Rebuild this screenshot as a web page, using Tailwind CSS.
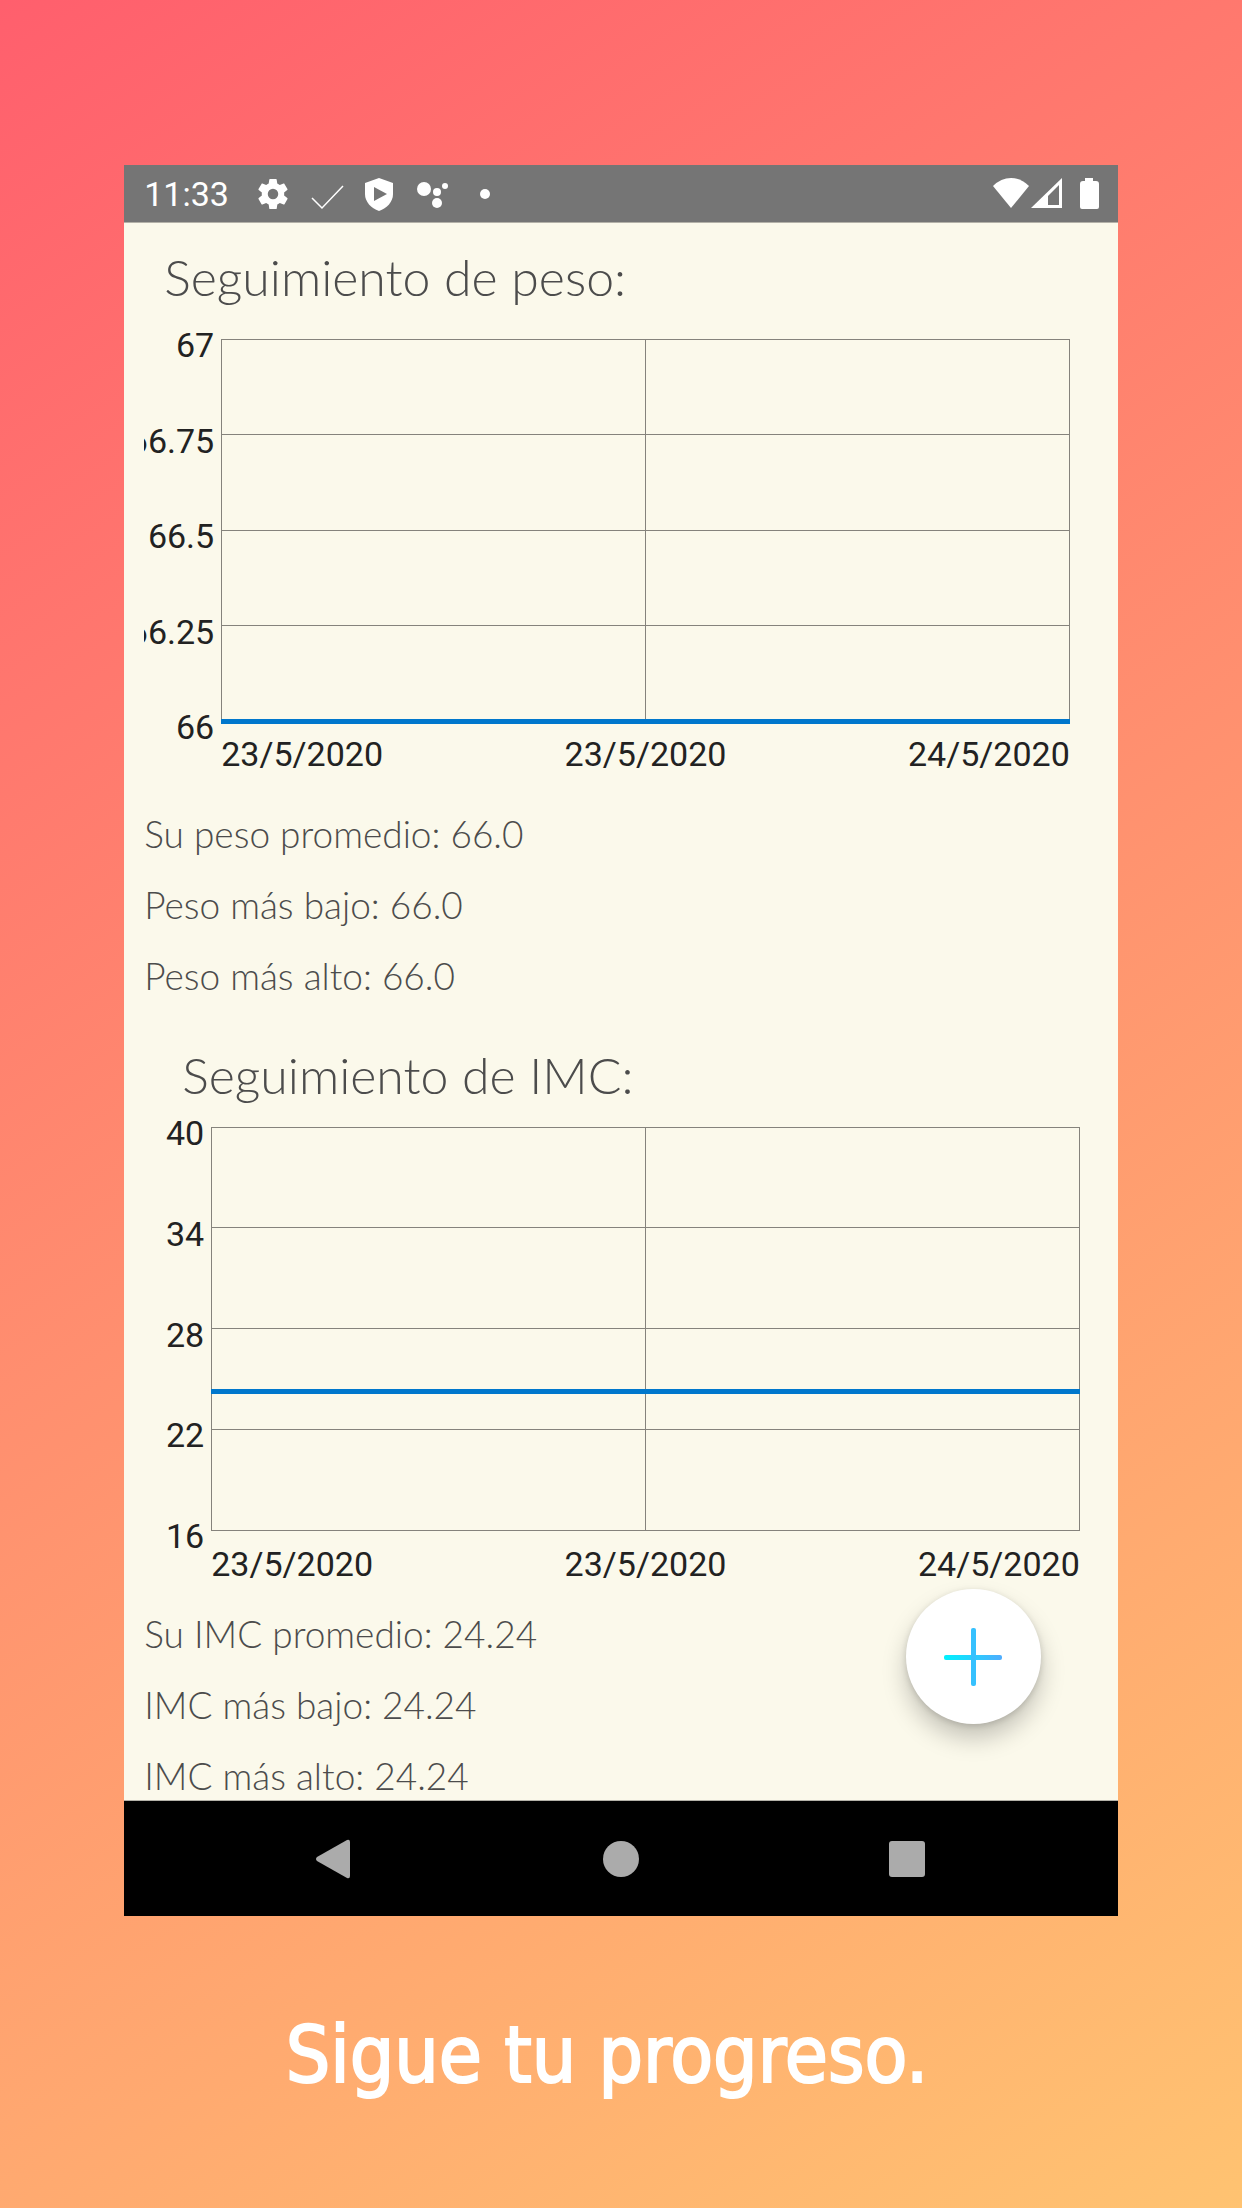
<!DOCTYPE html>
<html lang="es">
<head>
    <meta charset="UTF-8">
    <meta name="viewport" content="width=device-width, initial-scale=1.0">
    <title>Sigue tu progreso</title>
    <script src="https://cdn.jsdelivr.net/npm/@tailwindcss/browser@4"></script>
</head>
<body class="min-h-screen bg-linear-[149deg,#ff5f6d,#ffc371] pt-[165px] pb-16 flex flex-col items-center">
    <!-- Phone -->
    <main class="w-4/5 font-['Roboto',sans-serif]">
        <!-- Status Bar -->
        <header class="h-[57px] bg-[#757575] text-white flex items-center pl-5 pr-[11px]">
            <span class="text-[34px] leading-10">11:33</span>
            <div class="flex items-center gap-[17px] ml-[26px]">
                <svg class="size-9" viewBox="0 0 24 24" fill="currentColor"><path d="M19.4 13a7.500 7.500 0 0 0 0-2l2.100-1.650c.2-.15.250-.4.120-.64l-2-3.460c-.12-.22-.39-.3-.61-.22l-2.490 1a7.300 7.300 0 0 0-1.690-.98l-.38-2.650A.49.49 0 0 0 14 2h-4c-.25 0-.46.18-.49.42l-.38 2.650c-.61.25-1.170.59-1.690.98l-2.490-1c-.23-.09-.49 0-.61.22l-2 3.460c-.13.22-.07.49.12.64L4.570 11a7.900 7.900 0 0 0 0 2l-2.110 1.650c-.19.15-.24.42-.12.64l2 3.460c.12.22.39.3.61.22l2.490-1c.52.4 1.080.73 1.690.98l.38 2.650c.03.24.24.42.49.42h4c.25 0 .46-.18.49-.42l.38-2.650c.61-.25 1.170-.59 1.690-.98l2.490 1c.23.09.49 0 .61-.22l2-3.460c.12-.22.07-.49-.12-.64L19.430 13zM12 15.500a3.500 3.500 0 1 1 0-7 3.500 3.500 0 0 1 0 7z"/></svg>
                <svg class="size-9" viewBox="0 0 36 36" fill="none" stroke="currentColor" stroke-width="1.500"><path d="M4 22l10 10 21-22"/></svg>
                <svg class="size-9" viewBox="0 0 36 36"><path fill="currentColor" d="M18 2l14 5v11c0 8-6 14-14 17C10 32 4 26 4 18V7z"/><path fill="#757575" d="M13 11v14l13-7z"/></svg>
                <svg class="size-9" viewBox="0 0 36 36" fill="currentColor"><circle cx="10" cy="13" r="7"/><circle cx="23" cy="16" r="4"/><circle cx="23" cy="27" r="5"/><circle cx="31" cy="10" r="3"/></svg>
                <svg class="size-9" viewBox="0 0 36 36" fill="currentColor"><circle cx="18" cy="18" r="5"/></svg>
            </div>
            <div class="flex items-center ml-auto">
                <svg class="size-9" viewBox="0 0 36 36" fill="currentColor"><path d="M0 10Q8 2 18 2t18 8L18 32z"/></svg>
                <svg class="size-9" viewBox="0 0 36 36"><path fill="currentColor" d="M2 32L33 2v30z"/><path fill="#757575" d="M19 20l11-11v20H19z"/></svg>
                <svg class="size-9 ml-[6px]" viewBox="0 0 36 36" fill="currentColor"><path d="M14 2h8v3h3q3 0 3 3v23q0 2-2 2H11q-2 0-2-2V8q0-3 3-3h2z"/></svg>
            </div>
        </header>

        <!-- Content -->
        <div class="relative bg-[#fbf9eb] border-y border-[#b3b1a8] pt-[26px] pb-1 px-5 text-[#4c4c4c] font-['Lato',sans-serif] font-light">
            <h1 class="pl-5 text-[50px] leading-[56px]">Seguimiento de peso:</h1>
            <figure class="mt-5 flex pr-7 text-[34px] leading-10 font-['Roboto',sans-serif] font-normal text-[#222222]">
                <div class="h-[422px] w-[70px] shrink-0 overflow-hidden flex flex-col items-end justify-between">
                    <span>67</span><span>66.75</span><span>66.5</span><span>66.25</span><span>66</span>
                </div>
                <div class="grow ml-[7px] mt-[14px]">
                    <svg class="block w-full h-[382px] overflow-visible" stroke="#85837c" stroke-width="1" shape-rendering="crispEdges">
                        <line x1="0" x2="100%" y1="0" y2="0"/>
                        <line x1="0" x2="100%" y1="25%" y2="25%"/>
                        <line x1="0" x2="100%" y1="50%" y2="50%"/>
                        <line x1="0" x2="100%" y1="75%" y2="75%"/>
                        <line x1="0" x2="0" y1="0" y2="100%"/>
                        <line x1="50%" x2="50%" y1="0" y2="100%"/>
                        <line x1="100%" x2="100%" y1="0" y2="100%"/>
                        <line x1="0" x2="100%" y1="100%" y2="100%" stroke="#0077cc" stroke-width="5"/>
                    </svg>
                    <figcaption class="mt-[13px] flex justify-between"><span>23/5/2020</span><span>23/5/2020</span><span>24/5/2020</span></figcaption>
                </div>
            </figure>
            <ul class="mt-10 flex flex-col gap-[31px] text-[37px] leading-10">
                <li>Su peso promedio: 66.0</li>
                <li>Peso más bajo: 66.0</li>
                <li>Peso más alto: 66.0</li>
            </ul>

            <h2 class="mt-[51px] pl-[38px] text-[50px] leading-[56px]">Seguimiento de IMC:</h2>
            <figure class="mt-[10px] flex pr-[18px] text-[34px] leading-10 font-['Roboto',sans-serif] font-normal text-[#222222]">
                <div class="h-[443px] w-[60px] shrink-0 overflow-hidden flex flex-col items-end justify-between">
                    <span>40</span><span>34</span><span>28</span><span>22</span><span>16</span>
                </div>
                <div class="grow ml-[7px] mt-[14px]">
                    <svg class="block w-full h-[403px] overflow-visible" stroke="#85837c" stroke-width="1" shape-rendering="crispEdges">
                        <line x1="0" x2="100%" y1="0" y2="0"/>
                        <line x1="0" x2="100%" y1="25%" y2="25%"/>
                        <line x1="0" x2="100%" y1="50%" y2="50%"/>
                        <line x1="0" x2="100%" y1="75%" y2="75%"/>
                        <line x1="0" x2="100%" y1="100%" y2="100%"/>
                        <line x1="0" x2="0" y1="0" y2="100%"/>
                        <line x1="50%" x2="50%" y1="0" y2="100%"/>
                        <line x1="100%" x2="100%" y1="0" y2="100%"/>
                        <line x1="0" x2="100%" y1="65.600%" y2="65.600%" stroke="#0077cc" stroke-width="5"/>
                    </svg>
                    <figcaption class="mt-[14px] flex justify-between"><span>23/5/2020</span><span>23/5/2020</span><span>24/5/2020</span></figcaption>
                </div>
            </figure>
            <ul class="mt-[30px] flex flex-col gap-[31px] text-[37px] leading-10">
                <li>Su IMC promedio: 24.24</li>
                <li>IMC más bajo: 24.24</li>
                <li>IMC más alto: 24.24</li>
            </ul>

            <button aria-label="Añadir" class="absolute right-[77px] bottom-[76px] size-[135px] rounded-full bg-white shadow-[0_14px_24px_rgba(0,0,0,0.22),0_2px_6px_rgba(0,0,0,0.14)] flex items-center justify-center">
                <svg class="size-[58px]" viewBox="0 0 58 58">
                    <defs><linearGradient id="plus" x1="0" x2="58" y1="0" y2="0" gradientUnits="userSpaceOnUse"><stop stop-color="#00f2fe"/><stop offset="1" stop-color="#4facfe"/></linearGradient></defs>
                    <rect y="27" width="58" height="5" rx="2" fill="url(#plus)"/>
                    <rect x="27" width="5" height="58" rx="2" fill="#36c1fe"/>
                </svg>
            </button>
        </div>

        <!-- Navigation Bar -->
        <nav class="h-[115px] bg-black text-[#ababab] grid grid-cols-3 px-[66px]">
            <button aria-label="Atrás" class="flex items-center justify-center"><svg class="size-10" viewBox="0 0 40 40" fill="currentColor"><path d="M3 18L33 1q3-1 3 2v34q0 3-3 2L3 22q-2-2 0-4z"/></svg></button>
            <button aria-label="Inicio" class="flex items-center justify-center"><svg class="size-10" viewBox="0 0 40 40" fill="currentColor"><circle cx="20" cy="20" r="18"/></svg></button>
            <button aria-label="Recientes" class="flex items-center justify-center"><svg class="size-10" viewBox="0 0 40 40" fill="currentColor"><rect x="1" y="2" width="36" height="36" rx="3"/></svg></button>
        </nav>
    </main>

    <p class="mt-[91px] pr-7 text-white text-[78px] leading-[96px] font-['DejaVu_Sans_Condensed','DejaVu_Sans',sans-serif] [-webkit-text-stroke:2px_white]">Sigue tu progreso.</p>
</body>
</html>
